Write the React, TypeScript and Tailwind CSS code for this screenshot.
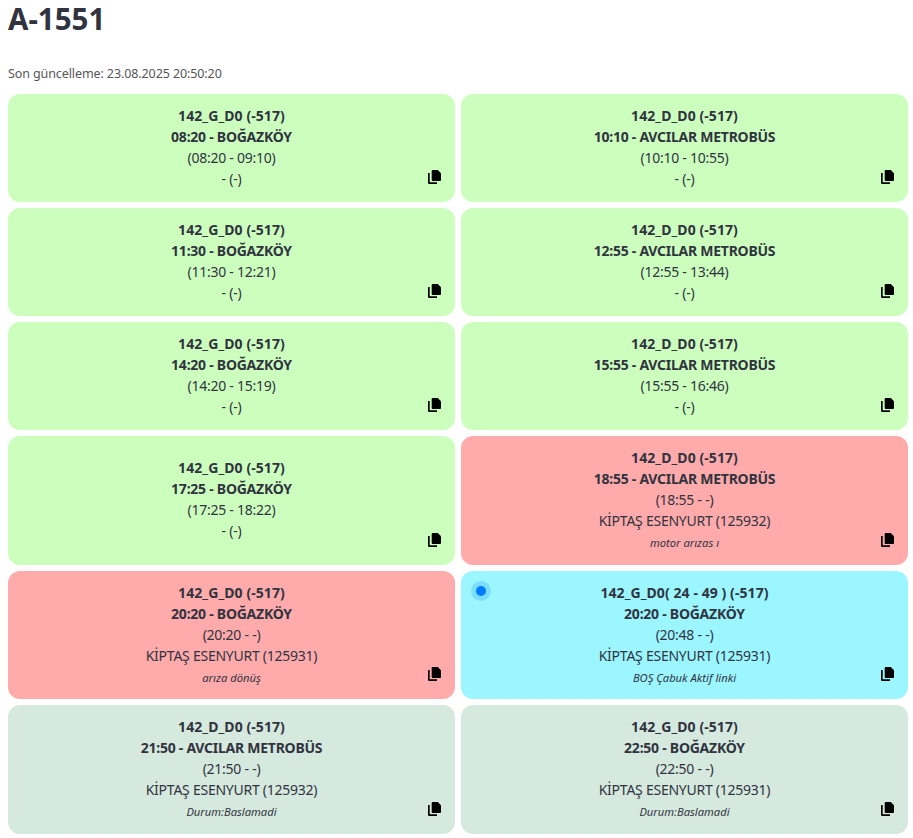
type Trip = {
    code: string;
    title: string;
    time: string;
    place: string;
    note?: string;
    color: string;
    live?: boolean;
};

const trips: Trip[] = [
    { code: '142_G_D0 (-517)', title: '08:20 - BOĞAZKÖY', time: '(08:20 - 09:10)', place: '- (-)', color: 'bg-[#ccffbe]' },
    { code: '142_D_D0 (-517)', title: '10:10 - AVCILAR METROBÜS', time: '(10:10 - 10:55)', place: '- (-)', color: 'bg-[#ccffbe]' },
    { code: '142_G_D0 (-517)', title: '11:30 - BOĞAZKÖY', time: '(11:30 - 12:21)', place: '- (-)', color: 'bg-[#ccffbe]' },
    { code: '142_D_D0 (-517)', title: '12:55 - AVCILAR METROBÜS', time: '(12:55 - 13:44)', place: '- (-)', color: 'bg-[#ccffbe]' },
    { code: '142_G_D0 (-517)', title: '14:20 - BOĞAZKÖY', time: '(14:20 - 15:19)', place: '- (-)', color: 'bg-[#ccffbe]' },
    { code: '142_D_D0 (-517)', title: '15:55 - AVCILAR METROBÜS', time: '(15:55 - 16:46)', place: '- (-)', color: 'bg-[#ccffbe]' },
    { code: '142_G_D0 (-517)', title: '17:25 - BOĞAZKÖY', time: '(17:25 - 18:22)', place: '- (-)', color: 'bg-[#ccffbe]' },
    { code: '142_D_D0 (-517)', title: '18:55 - AVCILAR METROBÜS', time: '(18:55 - -)', place: 'KİPTAŞ ESENYURT (125932)', note: 'motor arızas ı', color: 'bg-[#ffabab]' },
    { code: '142_G_D0 (-517)', title: '20:20 - BOĞAZKÖY', time: '(20:20 - -)', place: 'KİPTAŞ ESENYURT (125931)', note: 'arıza dönüş', color: 'bg-[#ffabab]' },
    { code: '142_G_D0( 24 - 49 ) (-517)', title: '20:20 - BOĞAZKÖY', time: '(20:48 - -)', place: 'KİPTAŞ ESENYURT (125931)', note: 'BOŞ Çabuk Aktif linki', color: 'bg-[#9bf6ff]', live: true },
    { code: '142_D_D0 (-517)', title: '21:50 - AVCILAR METROBÜS', time: '(21:50 - -)', place: 'KİPTAŞ ESENYURT (125932)', note: 'Durum:Baslamadi', color: 'bg-[#d6e9de]' },
    { code: '142_G_D0 (-517)', title: '22:50 - BOĞAZKÖY', time: '(22:50 - -)', place: 'KİPTAŞ ESENYURT (125931)', note: 'Durum:Baslamadi', color: 'bg-[#d6e9de]' },
];

function CopyIcon() {
    return (
        <svg viewBox="0 0 13 14" width="13" height="14" className="absolute bottom-[18px] right-[14px]" fill="#000">
            <path d="M0 3h1.7v9.3H9V14H1.2A1.2 1.2 0 0 1 0 12.8z" />
            <path d="M4.6 0h5.2L13 3.2v6.9a.9.9 0 0 1-.9.9H4.6a.9.9 0 0 1-.9-.9V.9a.9.9 0 0 1 .9-.9z" />
        </svg>
    );
}

function TripCard({ trip }: { trip: Trip }) {
    return (
        <div className={`relative flex flex-col justify-center rounded-[12px] pb-[13px] pt-[11px] text-center text-[14px] leading-[21px] tracking-[-0.25px] ${trip.color}`}>
            {trip.live && (
                <span className="absolute left-[10px] top-[10px] flex h-5 w-5 items-center justify-center rounded-full bg-[#007bff]/20">
                    <span className="h-[10px] w-[10px] rounded-full bg-[#007bff]" />
                </span>
            )}
            <div className="font-bold tracking-[0.08px]">{trip.code}</div>
            <div className="font-bold">{trip.title}</div>
            <div>{trip.time}</div>
            <div>{trip.place}</div>
            {trip.note && <div className="pt-1 text-[11.2px] italic leading-[16.6px] tracking-normal">{trip.note}</div>}
            <CopyIcon />
        </div>
    );
}

export default function App() {
    return (
        <div className="min-h-screen bg-white pl-2 pr-[5px] text-[#31333f] [font-family:'Noto_Sans',sans-serif]">
            <h1 className="h-[60px] text-[29.5px] font-bold leading-[38px]">A-1551</h1>
            <p className="mb-[6px] flex h-[28px] items-center text-[12.5px] tracking-[-0.1px] text-[#555]">Son güncelleme: 23.08.2025 20:50:20</p>
            <div className="grid grid-cols-2 gap-[6px]">
                {trips.map((trip, i) => (
                    <TripCard key={i} trip={trip} />
                ))}
            </div>
        </div>
    );
}
